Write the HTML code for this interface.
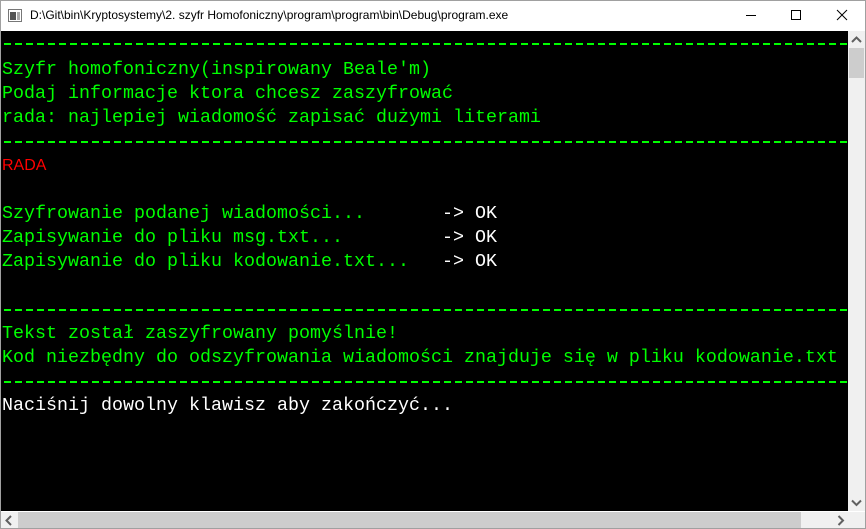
<!DOCTYPE html>
<html><head><meta charset="utf-8"><style>
*{margin:0;padding:0;box-sizing:border-box}
body{width:866px;height:529px;overflow:hidden;background:#fff;position:relative;font-family:"Liberation Sans",sans-serif}
#frame{position:absolute;left:0;top:0;width:866px;height:529px;border:1px solid #a0a0a0}
#title{position:absolute;left:30px;top:8px;font-size:12px;color:#000}
#con{position:absolute;left:1px;top:31px;width:847px;height:480px;background:#000;overflow:hidden}
pre{position:absolute;left:1px;top:3px;font-family:"Liberation Mono",monospace;font-size:18.33px;line-height:24px;color:#00ff00;white-space:pre}
.w{color:#fff}
.r{color:#ff0000;font-family:"Liberation Sans",sans-serif;font-size:16px}
.d{display:inline-block;width:847px;height:24px;vertical-align:top;background:repeating-linear-gradient(90deg,transparent 0,transparent 2px,#00ff00 2px,#00ff00 9px,transparent 9px,transparent 11px) 0 11px/847px 2px no-repeat}
#vs{position:absolute;left:848px;top:31px;width:17px;height:480px;background:#f0f0f0}
#vt{position:absolute;left:849px;top:48px;width:15px;height:30px;background:#cdcdcd}
#hs{position:absolute;left:1px;top:512px;width:864px;height:16px;background:#f0f0f0}
#ht{position:absolute;left:18px;top:512px;width:783px;height:16px;background:#cdcdcd}
</style></head><body>
<div id="frame"></div>
<svg style="position:absolute;left:8px;top:9px" width="14" height="13" viewBox="0 0 14 13"><rect x="0.5" y="0.5" width="13" height="12" fill="#fff" stroke="#777"/><rect x="2" y="3" width="6" height="8" fill="#555"/><rect x="9" y="3" width="3" height="8" fill="#aaa"/></svg>
<div id="title">D:\Git\bin\Kryptosystemy\2. szyfr Homofoniczny\program\program\bin\Debug\program.exe</div>
<svg style="position:absolute;left:740px;top:8px" width="110" height="16" viewBox="0 0 110 16"><line x1="6" y1="7.5" x2="16" y2="7.5" stroke="#000"/><rect x="51.5" y="2.5" width="9" height="9" fill="none" stroke="#000"/><path d="M97 2L107 12M107 2L97 12" stroke="#000"/></svg>
<div id="con"><pre><span class="d" style="margin-top:-2px"></span>
Szyfr homofoniczny(inspirowany Beale'm)
Podaj informacje ktora chcesz zaszyfrować
rada: najlepiej wiadomość zapisać dużymi literami
<span class="d"></span>
<span class="r">RADA</span>

Szyfrowanie podanej wiadomości...       <span class="w">-&gt; OK</span>
Zapisywanie do pliku msg.txt...         <span class="w">-&gt; OK</span>
Zapisywanie do pliku kodowanie.txt...   <span class="w">-&gt; OK</span>

<span class="d"></span>
Tekst został zaszyfrowany pomyślnie!
Kod niezbędny do odszyfrowania wiadomości znajduje się w pliku kodowanie.txt
<span class="d"></span>
<span class="w">Naciśnij dowolny klawisz aby zakończyć...</span></pre></div>
<div id="vs"></div><div id="vt"></div>
<svg style="position:absolute;left:851px;top:36px" width="11" height="8"><path d="M1 6L5.5 1.5L10 6" stroke="#606060" stroke-width="2" fill="none"/></svg>
<svg style="position:absolute;left:851px;top:499px" width="11" height="8"><path d="M1 1.5L5.5 6L10 1.5" stroke="#606060" stroke-width="2" fill="none"/></svg>
<div id="hs"></div><div id="ht"></div>
<svg style="position:absolute;left:5px;top:515px" width="8" height="11"><path d="M6 1L1.5 5.5L6 10" stroke="#606060" stroke-width="2" fill="none"/></svg>
<svg style="position:absolute;left:837px;top:515px" width="8" height="11"><path d="M1.5 1L6 5.5L1.5 10" stroke="#606060" stroke-width="2" fill="none"/></svg>
</body></html>
